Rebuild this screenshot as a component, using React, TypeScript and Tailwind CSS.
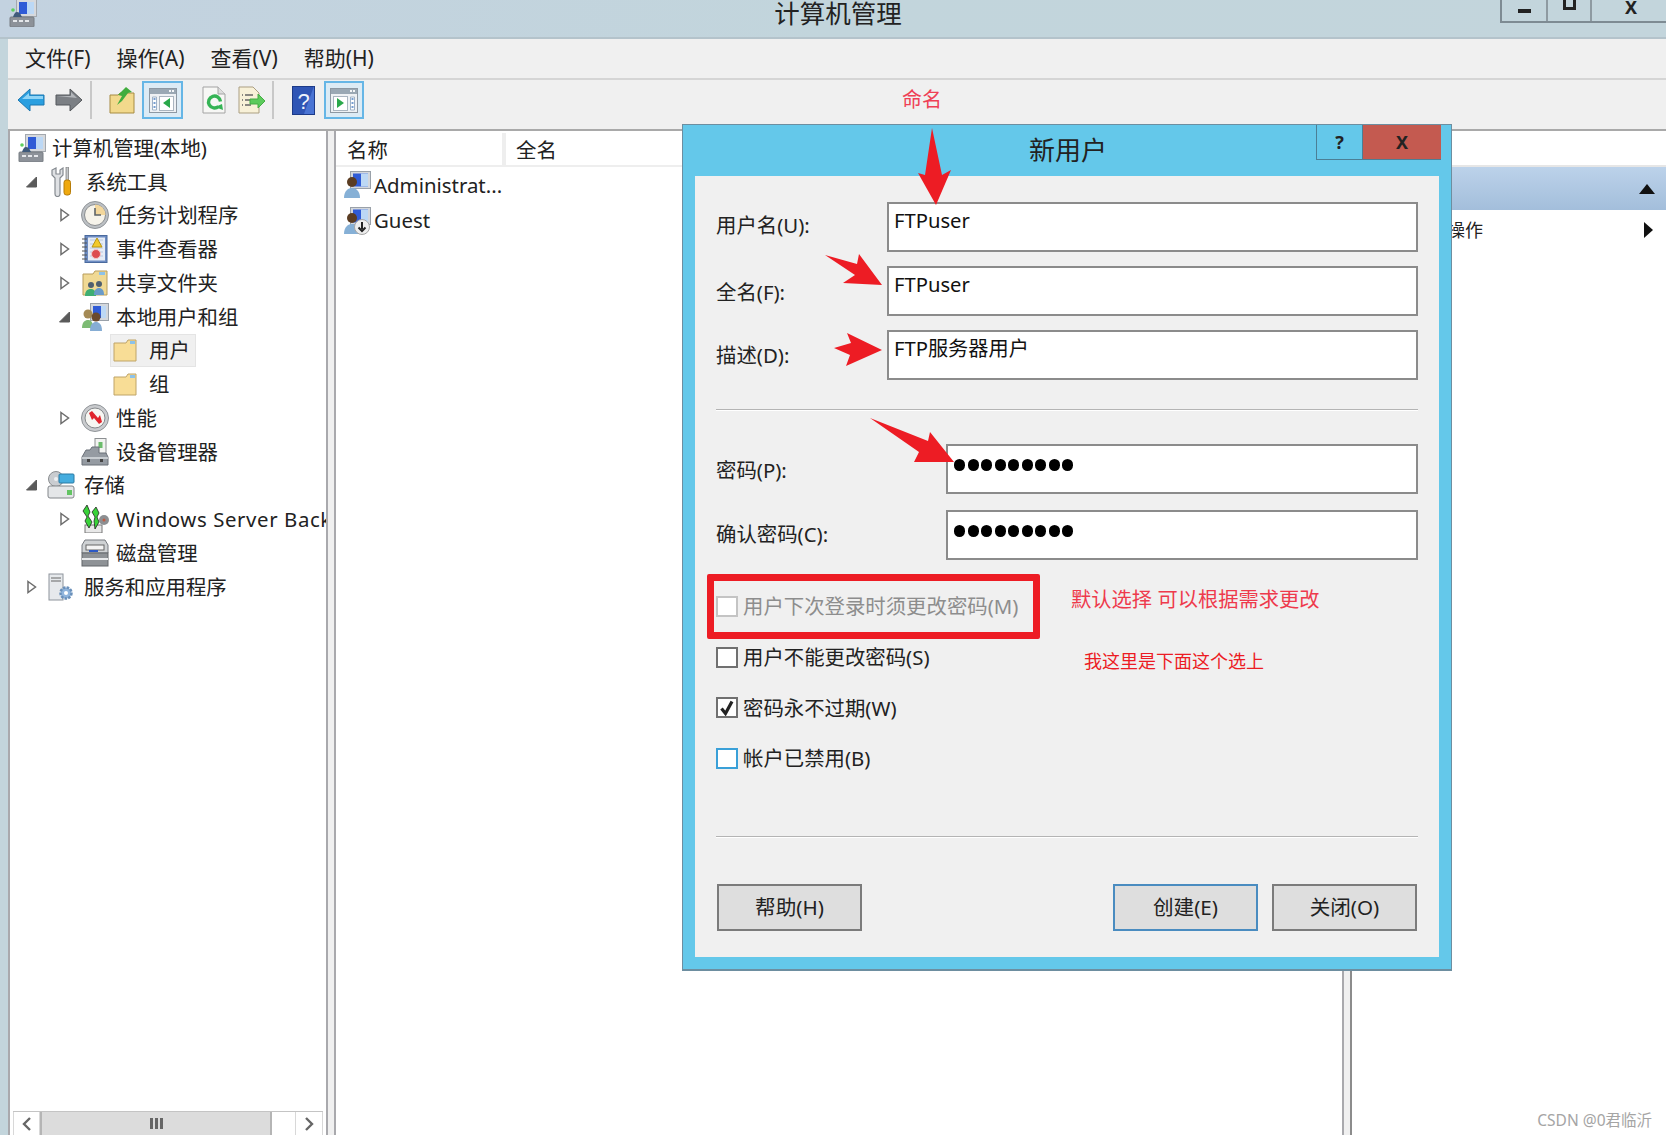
import React from "react";

const FONT = "font-['Noto_Sans','Noto_Sans_CJK_SC',sans-serif]";

function Computer() {
  return (
    <svg width="28" height="28" viewBox="0 0 28 28">
      <rect x="7.5" y="0.5" width="20" height="17" fill="#d6d9dd" stroke="#a3a8ae" />
      <rect x="10" y="3" width="15" height="12" fill="#2f5bd6" />
      <path d="M18 3h7v12h-7z" fill="#bcd8f5" />
      <rect x="1" y="18" width="24" height="10" rx="1" fill="#8d9299" stroke="#777c82" />
      <path d="M4 22h4M10 22h4M16 22h4" stroke="#e5e7ea" strokeWidth="2" />
      <circle cx="4" cy="11" r="1.8" fill="#5fcf5f" />
      <path d="M8 13c3 0 4 3 5 5H4c1-3 2-5 4-5z" fill="#3f5a7a" />
    </svg>
  );
}
function Tools() {
  return (
    <svg width="22" height="30" viewBox="0 0 22 30">
      <path d="M2 3v5l3 3v16a2 2 0 0 0 5 0V11l3-3V1l-3 2v4H6V1z" fill="#dfe1e4" stroke="#858a90" strokeWidth="1.2" />
      <rect x="16" y="0" width="2.5" height="14" fill="#c4c7ca" stroke="#777" strokeWidth=".7" />
      <rect x="14" y="13" width="6.5" height="15" rx="2.5" fill="#efa90f" stroke="#b67c08" />
    </svg>
  );
}
function Clock() {
  return (
    <svg width="28" height="28" viewBox="0 0 28 28">
      <circle cx="14" cy="14" r="13.5" fill="#bcc0c4" stroke="#909498" />
      <circle cx="14" cy="14" r="10.5" fill="#f6f3ea" stroke="#8a8d90" />
      <path d="M14 3.5A10.5 10.5 0 0 1 24.5 14H14z" fill="#f3d79c" />
      <path d="M14 7v7h6" fill="none" stroke="#5e6468" strokeWidth="1.6" />
    </svg>
  );
}
function EventLog() {
  return (
    <svg width="26" height="28" viewBox="0 0 26 28">
      <rect x="3" y="0.5" width="22" height="27" fill="#6d8cc2" stroke="#4a6a9e" />
      <rect x="6" y="2.5" width="17" height="23" fill="#e6ecf6" />
      <path d="M8 5h13M8 9h13M8 13h13M8 17h13M8 21h13" stroke="#b9c8de" />
      <path d="M15 3l5 9h-10z" fill="#f2c92a" stroke="#b79515" />
      <circle cx="14" cy="19" r="4.5" fill="#dc4c50" stroke="#f4c6c6" />
      <path d="M0 4h5M0 8h5M0 12h5M0 16h5M0 20h5M0 24h5" stroke="#555" />
    </svg>
  );
}
function ShareFolder() {
  return (
    <svg width="26" height="28" viewBox="0 0 26 28">
      <path d="M1 5h10l2-3h12v24H1z" fill="#f0d994" stroke="#b89d5c" />
      <path d="M17 3h6v3h-6z" fill="#8cc2ea" />
      <circle cx="9" cy="16" r="3" fill="#4f5f6f" />
      <circle cx="17" cy="15" r="3" fill="#4f5f6f" />
      <path d="M3 27c0-6 3-7 6-7s5 2 5 7z" fill="#3fae72" />
      <path d="M12 26c0-5 2-7 5-7s5 2 5 7z" fill="#6a9bc9" />
    </svg>
  );
}
function Users() {
  return (
    <svg width="28" height="28" viewBox="0 0 28 28">
      <rect x="9.5" y="0.5" width="18" height="17" fill="#d3d7dc" stroke="#9aa1a9" />
      <rect x="12" y="3" width="13" height="12" fill="#2f5bd6" />
      <path d="M20 3h5v12h-5z" fill="#bcd8f5" />
      <circle cx="7" cy="11" r="4.5" fill="#a48a55" />
      <circle cx="15" cy="14" r="4.5" fill="#6b4a2e" />
      <path d="M1 25c0-6 3-8 6-8s5 2 5 8z" fill="#7dbb74" />
      <path d="M9 28c0-7 3-9 6-9s6 2 6 9z" fill="#86add4" />
    </svg>
  );
}
function Folder() {
  return (
    <svg width="24" height="23" viewBox="0 0 24 23">
      <path d="M1 4h12l2-3h8v21H1z" fill="#f8dd96" stroke="#bfa468" />
      <path d="M17 2h5v3h-5z" fill="#8cc2ea" />
    </svg>
  );
}
function Perf() {
  return (
    <svg width="28" height="28" viewBox="0 0 28 28">
      <circle cx="14" cy="14" r="13.5" fill="#c9cbce" stroke="#909498" />
      <circle cx="14" cy="14" r="10" fill="#f6f6f2" stroke="#86898c" />
      <path d="M8 9l3-2 6 7 2-3 2 7-3 2-5-6-2 2z" fill="#e0242c" />
    </svg>
  );
}
function Device() {
  return (
    <svg width="28" height="28" viewBox="0 0 28 28">
      <rect x="14" y="0.5" width="11" height="15" fill="#f2f3f1" stroke="#8c8f92" />
      <rect x="17.5" y="4" width="4" height="6" fill="#6cbc6c" />
      <path d="M9 12l2-3h7v6h7l2 4v8H1v-8l4-7z" fill="#959ba2" stroke="#6a7078" />
      <path d="M1 20h26" stroke="#dfe2e5" strokeWidth="1.4" />
      <rect x="6" y="21" width="3" height="3" fill="#444" />
      <rect x="19" y="21" width="3" height="3" fill="#444" />
    </svg>
  );
}
function Storage() {
  return (
    <svg width="28" height="28" viewBox="0 0 28 28">
      <circle cx="9" cy="8" r="7.5" fill="#c9ccd0" stroke="#8a8d90" />
      <circle cx="9" cy="8" r="2" fill="#eef0f2" />
      <rect x="12" y="3" width="15" height="9" rx="1" fill="#45addf" stroke="#2b7ba4" />
      <rect x="1" y="15" width="26" height="12" rx="2" fill="#e4e6e8" stroke="#82868a" />
      <rect x="20" y="19" width="5" height="5" fill="#63c463" />
    </svg>
  );
}
function Backup() {
  return (
    <svg width="28" height="28" viewBox="0 0 28 28">
      <rect x="4" y="20" width="17" height="8" fill="#e8e8e8" stroke="#777" />
      <circle cx="23" cy="15" r="5" fill="#8c8f92" />
      <circle cx="23" cy="15" r="1.5" fill="#c05a42" />
      <path d="M6 0l3 7-2 4 4 6-3 6-4-7 2-4-4-6z" fill="#39d339" stroke="#222" strokeWidth=".8" />
      <path d="M15 2l3 6-2 4 2 5-4 7-1-8 1-4-3-5z" fill="#39d339" stroke="#222" strokeWidth=".8" />
    </svg>
  );
}
function Disk() {
  return (
    <svg width="28" height="28" viewBox="0 0 28 28">
      <path d="M4 1h20l3 5v8H1V6z" fill="#cfd2d4" stroke="#777b80" />
      <rect x="5" y="6" width="18" height="5" fill="#f4f4f4" stroke="#666" />
      <rect x="1" y="14" width="26" height="13" fill="#8e9296" stroke="#62666a" />
      <path d="M1 20h26" stroke="#e7e9eb" strokeWidth="2" />
      <path d="M8 12h9" stroke="#2c59c5" strokeWidth="2" />
    </svg>
  );
}
function Services() {
  return (
    <svg width="26" height="28" viewBox="0 0 26 28">
      <rect x="1" y="1" width="14" height="26" fill="#e6e9ec" stroke="#8e949c" />
      <path d="M3 5h10M3 8h10" stroke="#666" />
      <circle cx="18" cy="20" r="5.5" fill="#8fb4dc" stroke="#6a90ba" strokeDasharray="2.5 1.2" strokeWidth="2.5" />
      <circle cx="18" cy="20" r="2" fill="#fff" />
    </svg>
  );
}
function UserAdmin({ guest }: { guest?: boolean }) {
  return (
    <svg width="27" height="28" viewBox="0 0 27 28">
      <rect x="6.5" y="0.5" width="20" height="17" fill="#d3d7dc" stroke="#9aa1a9" />
      <rect x="9" y="2.5" width="15" height="13" fill="#2f5bd6" />
      <path d="M17 2.5h7v13h-7z" fill="#bcd8f5" />
      <circle cx="8" cy="11" r="5" fill="#5a3c22" />
      <path d="M0 27c0-7 4-10 8-10s8 3 8 10z" fill="#86b0d6" />
      {guest && (
        <>
          <circle cx="18" cy="20" r="7.5" fill="#eeeeee" stroke="#a5a5a5" />
          <path d="M18 15v7M14.5 20.5l3.5 3.5 3.5-3.5" fill="none" stroke="#222" strokeWidth="2" />
        </>
      )}
    </svg>
  );
}

function Expander({ open }: { open?: boolean }) {
  return (
    <svg width="12" height="14" viewBox="0 0 12 14" className="shrink-0">
      {open ? (
        <path d="M10.5 2v10h-10z" fill="#5a5a5a" stroke="#5a5a5a" />
      ) : (
        <path d="M2 1.5l7.5 5.5L2 12.5z" fill="#fff" stroke="#6e6e6e" strokeWidth="1.5" />
      )}
    </svg>
  );
}

function TreeRow({
  pad,
  exp,
  icon,
  gap,
  children,
}: {
  pad: string;
  exp?: "open" | "closed";
  icon: React.ReactNode;
  gap: string;
  children: React.ReactNode;
}) {
  return (
    <div className={`flex h-[33.75px] items-center whitespace-nowrap ${pad}`}>
      <div className="w-[12px] shrink-0">{exp && <Expander open={exp === "open"} />}</div>
      <div className={`flex w-[28px] shrink-0 justify-center ${gap}`}>{icon}</div>
      {children}
    </div>
  );
}

function Field({
  label,
  value,
  inputW,
  dots,
  labelCls,
}: {
  label: string;
  value?: string;
  inputW: string;
  dots?: boolean;
  labelCls: string;
}) {
  return (
    <div className="flex items-center justify-between">
      <span className={`text-[20.4px] text-[#222] ${labelCls}`}>{label}</span>
      <div className={`h-full min-h-[50px] border-2 border-[#8b8b8b] bg-white pl-[5px] pt-[1px] text-[20.2px] leading-[30px] text-[#111] ${inputW}`}>
        {dots ? (
          <div className="flex h-[35px] items-center gap-[2.5px] pl-[1px]">
            {[0, 1, 2, 3, 4, 5, 6, 7, 8].map((i) => (
              <span key={i} className="h-[12px] w-[11px] rounded-full bg-black" />
            ))}
          </div>
        ) : (
          value
        )}
      </div>
    </div>
  );
}

function Check({ label, tone, checked, disabled }: { label: string; tone: string; checked?: boolean; disabled?: boolean }) {
  return (
    <div className="flex h-[21px] items-center gap-[5px]">
      <div className={`flex h-[21px] w-[22px] items-center justify-center border-2 bg-white ${tone}`}>
        {checked && (
          <svg width="16" height="16" viewBox="0 0 16 16">
            <path d="M2.5 8.5L6.5 13.5 13 1.5" fill="none" stroke="#222" strokeWidth="3.2" />
          </svg>
        )}
      </div>
      <span className={`text-[20.4px] ${disabled ? "text-[#8d8d8d]" : "text-[#222]"}`}>{label}</span>
    </div>
  );
}

function Btn({ label, tone }: { label: string; tone: string }) {
  return (
    <div className={`flex h-[47px] w-[145px] items-center justify-center border-2 bg-[#dedede] text-[20.6px] text-[#222] ${tone}`}>
      {label}
    </div>
  );
}

function PaneIcon({ left }: { left?: boolean }) {
  return (
    <svg width="28" height="25" viewBox="0 0 28 25">
      <rect x="0.5" y="0.5" width="27" height="24" fill="#eef1f4" stroke="#8d98a3" />
      <rect x="1" y="1" width="26" height="5" fill="#9aa8b4" />
      <path d="M20 3h2M23 3h2" stroke="#f4f6f8" strokeWidth="2" />
      {left ? (
        <>
          <path d="M3.5 9h4v13h-4z" fill="#fff" stroke="#9fb2c7" />
          <path d="M4.5 11h2M4.5 15h2M4.5 19h2" stroke="#4a7fc2" strokeWidth="1.6" />
          <rect x="10.5" y="8.5" width="14" height="14" fill="#fff" stroke="#aab5c0" />
          <path d="M21 10v10l-7-5z" fill="#2aa84a" />
        </>
      ) : (
        <>
          <path d="M20.5 9h4v13h-4z" fill="#fff" stroke="#9fb2c7" />
          <path d="M21.5 11h2M21.5 15h2M21.5 19h2" stroke="#4a7fc2" strokeWidth="1.6" />
          <rect x="3.5" y="8.5" width="14" height="14" fill="#fff" stroke="#aab5c0" />
          <path d="M7 10v10l7-5z" fill="#2aa84a" />
        </>
      )}
    </svg>
  );
}

export default function App() {
  return (
    <div className={`relative flex h-[1135px] w-[1666px] flex-col overflow-hidden bg-[#c3d5dc] ${FONT}`}>
      {/* Title bar */}
      <div className="relative flex h-[39px] shrink-0 items-start justify-center border-b-2 border-[#b4c3cb] bg-[linear-gradient(90deg,#c3d2e0_0%,#c2d5dc_50%,#c3d5dc_100%)]">
        <div className="absolute left-[9px] top-[-1px]">
          <Computer />
        </div>
        <span className="ml-[10px] mt-[-4px] text-[25.5px] leading-[34px] text-[#222]">计算机管理</span>
        <div className="absolute right-0 top-0 flex h-[23px] w-[166px] border-b-2 border-l-2 border-[#7e8b93]">
          <div className="flex w-[46px] items-center justify-center border-r-2 border-[#8e9aa1]">
            <span className="h-[4px] w-[13px] bg-[#222]" />
          </div>
          <div className="flex w-[44px] items-start justify-center border-r-2 border-[#8e9aa1]">
            <span className="h-[10px] w-[13px] border-[3px] border-t-0 border-[#222]" />
          </div>
          <div className="flex flex-1 items-start justify-center pl-[4px] text-[18px] font-bold leading-[14px] text-[#222]">X</div>
        </div>
      </div>

      <div className="ml-[8px] flex min-h-0 flex-1 flex-col bg-[#f0f0f0]">
        {/* Menu bar */}
        <div className="flex h-[41px] shrink-0 items-center gap-[26px] border-b-2 border-[#d5d5d5] pl-[17px] text-[21px] text-[#222]">
          <span>文件(F)</span>
          <span>操作(A)</span>
          <span>查看(V)</span>
          <span>帮助(H)</span>
        </div>

        {/* Toolbar */}
        <div className="relative flex h-[49px] shrink-0 items-center pb-[9px] pl-[9px]">
          <svg width="28" height="24" viewBox="0 0 28 24">
            <path d="M1 12L13 1v6h14v10H13v6z" fill="#2a9fe0" stroke="#1b77b0" />
            <path d="M5 11l7-6v3h14v3z" fill="#8fd4f6" />
          </svg>
          <svg width="28" height="24" viewBox="0 0 28 24" className="ml-[10px]">
            <path d="M27 12L15 1v6H1v10h14v6z" fill="#7b7f84" stroke="#55585c" />
            <path d="M2 8h14V4l6 6z" fill="#b3b6ba" />
          </svg>
          <div className="ml-[7px] h-[38px] w-[2px] bg-[#c8c8c8]" />
          <svg width="26" height="28" viewBox="0 0 26 28" className="ml-[17px]">
            <path d="M1 9h8l2-2h14v20H1z" fill="#f2d98c" stroke="#a68b42" />
            <path d="M8 19l5-9-4-1 8-8 6 5-4 1-6 8z" fill="#40ad3d" />
          </svg>
          <div className="ml-[7px] flex h-[38px] w-[41px] items-center justify-center border-2 border-[#66b6e6] bg-[#dcebf5]">
            <PaneIcon left />
          </div>
          <svg width="24" height="28" viewBox="0 0 24 28" className="ml-[19px]">
            <path d="M1 1h15l7 7v19H1z" fill="#f7f7f5" stroke="#a3a3a3" />
            <path d="M16 1v7h7" fill="#ddd" stroke="#a3a3a3" />
            <path d="M16.5 20.5a6 6 0 1 1 2-5" fill="none" stroke="#35b455" strokeWidth="3.4" />
            <path d="M13 21l7 -3 1 6z" fill="#35b455" />
          </svg>
          <svg width="28" height="28" viewBox="0 0 28 28" className="ml-[12px]">
            <path d="M1 1h14l6 6v20H1z" fill="#f8f1d8" stroke="#ab9f82" />
            <path d="M4 9h1M7 9h8M4 14h1M7 14h6M4 19h1M7 19h6" stroke="#666" strokeWidth="1.5" />
            <path d="M12 13h8V8l7 7-7 7v-4h-8z" fill="#5ccb5c" stroke="#45ac45" />
          </svg>
          <div className="ml-[6px] h-[38px] w-[2px] bg-[#c8c8c8]" />
          <svg width="23" height="29" viewBox="0 0 23 29" className="ml-[18px]">
            <rect x="0.5" y="0.5" width="22" height="28" fill="#2f55b5" stroke="#1c3a88" />
            <path d="M22 0v28l-10 0z" fill="#4a74d4" />
            <text x="11.5" y="23" textAnchor="middle" fontSize="22" fill="#eef2fc" fontFamily="'Liberation Sans',sans-serif">?</text>
          </svg>
          <div className="ml-[9px] flex h-[38px] w-[40px] items-center justify-center border-2 border-[#66b6e6] bg-[#dcebf5]">
            <PaneIcon />
          </div>
          <span className="absolute left-[894px] top-[5px] text-[20px] leading-[30px] text-[#ef4055]">命名</span>
        </div>

        {/* Panes */}
        <div className="flex min-h-0 flex-1 gap-[6px] border-t-2 border-[#a9a9a9]">
          {/* Tree pane */}
          <div className="flex w-[320px] shrink-0 flex-col overflow-hidden border-x-2 border-[#a9a9ad] bg-white text-[20.4px] leading-[30px] text-[#222]">
            <div className="flex-1 overflow-hidden">
              <TreeRow pad="pl-[5px]" icon={<Computer />} gap="mr-[6px] -ml-[9px]">计算机管理(本地)</TreeRow>
              <TreeRow pad="pl-[16px]" exp="open" icon={<Tools />} gap="ml-[9px] mr-[11px]">系统工具</TreeRow>
              <TreeRow pad="pl-[49px]" exp="closed" icon={<Clock />} gap="ml-[10px] mr-[7px]">任务计划程序</TreeRow>
              <TreeRow pad="pl-[49px]" exp="closed" icon={<EventLog />} gap="ml-[10px] mr-[7px]">事件查看器</TreeRow>
              <TreeRow pad="pl-[49px]" exp="closed" icon={<ShareFolder />} gap="ml-[10px] mr-[7px]">共享文件夹</TreeRow>
              <TreeRow pad="pl-[49px]" exp="open" icon={<Users />} gap="ml-[10px] mr-[7px]">本地用户和组</TreeRow>
              <div className="ml-[100px] flex h-[33.75px] w-[86px] items-center border border-[#e4e4e4] bg-[#f0f0f0] pl-[2px]">
                <Folder />
                <span className="ml-[12px]">用户</span>
              </div>
              <div className="ml-[103px] flex h-[33.75px] items-center">
                <Folder />
                <span className="ml-[12px]">组</span>
              </div>
              <TreeRow pad="pl-[49px]" exp="closed" icon={<Perf />} gap="ml-[10px] mr-[7px]">性能</TreeRow>
              <TreeRow pad="pl-[49px]" icon={<Device />} gap="ml-[10px] mr-[7px]">设备管理器</TreeRow>
              <TreeRow pad="pl-[16px]" exp="open" icon={<Storage />} gap="ml-[9px] mr-[9px]">存储</TreeRow>
              <TreeRow pad="pl-[49px]" exp="closed" icon={<Backup />} gap="ml-[10px] mr-[7px]">
                <span className="pb-[1px] tracking-[0.6px]">Windows Server Backup</span>
              </TreeRow>
              <TreeRow pad="pl-[49px]" icon={<Disk />} gap="ml-[10px] mr-[7px]">磁盘管理</TreeRow>
              <TreeRow pad="pl-[16px]" exp="closed" icon={<Services />} gap="ml-[9px] mr-[9px]">服务和应用程序</TreeRow>
            </div>
            {/* Scrollbar */}
            <div className="mx-[3px] flex h-[24px] shrink-0 border-t border-[#c4c4c4] text-[#666]">
              <div className="flex w-[27px] items-center justify-center border-x border-[#d8d8d8]">
                <svg width="10" height="14" viewBox="0 0 10 14"><path d="M8 1L2 7l6 6" fill="none" stroke="#666" strokeWidth="2.4" /></svg>
              </div>
              <div className="flex w-[232px] items-center justify-center gap-[2px] border-x-2 border-[#b5b5b5] bg-[#dcdcdc]">
                <span className="h-[11px] w-[3px] bg-[#666]" />
                <span className="h-[11px] w-[3px] bg-[#666]" />
                <span className="h-[11px] w-[3px] bg-[#666]" />
              </div>
              <div className="flex-1" />
              <div className="flex w-[28px] items-center justify-center border-x border-[#d8d8d8]">
                <svg width="10" height="14" viewBox="0 0 10 14"><path d="M2 1l6 6-6 6" fill="none" stroke="#666" strokeWidth="2.4" /></svg>
              </div>
            </div>
          </div>

          {/* List pane */}
          <div className="flex w-[1010px] shrink-0 flex-col border-x-2 border-[#a9a9ad] bg-white pt-[2px] text-[20.4px] text-[#222]">
            <div className="flex h-[34px] shrink-0 border-b-2 border-[#eeeeee] pl-[2px]">
              <div className="flex w-[168px] items-center border-r-4 border-[#eeeeee] pl-[9px] pt-[3px]">名称</div>
              <div className="flex items-center pl-[10px] pt-[3px]">全名</div>
            </div>
            <div className="flex h-[36px] items-center gap-[3px] pl-[8px]">
              <UserAdmin />
              <span>Administrat...</span>
            </div>
            <div className="flex h-[35px] items-center gap-[3px] pl-[8px]">
              <UserAdmin guest />
              <span>Guest</span>
            </div>
          </div>

          {/* Actions pane */}
          <div className="flex min-w-0 flex-1 flex-col border-l-2 border-[#8c8c8c] bg-white text-[18px] text-[#222]">
            <div className="h-[36px] shrink-0 border-b-2 border-[#e6e6e6] bg-white" />
            <div className="flex h-[43px] shrink-0 items-center justify-end bg-[linear-gradient(180deg,#bcd2ea,#a3bedb)] pr-[11px]">
              <svg width="16" height="10" viewBox="0 0 16 10"><path d="M8 0l8 10H0z" fill="#111" /></svg>
            </div>
            <div className="flex h-[40px] shrink-0 items-center justify-between pl-[95px] pr-[13px]">
              <span>操作</span>
              <svg width="9" height="16" viewBox="0 0 9 16"><path d="M0 0l9 8-9 8z" fill="#111" /></svg>
            </div>
          </div>
        </div>
      </div>

      {/* Dialog window */}
      <div className="absolute left-[682px] top-[124px] flex h-[847px] w-[770px] flex-col border border-b-2 border-[#6d8ea0] bg-[#64c8ea] px-[12px] pb-[12px]">
        <div className="relative flex h-[51px] shrink-0 items-center justify-center text-[26px] text-[#222]">
          <span className="mr-[-2px] mt-[-1px]">新用户</span>
          <div className="absolute right-[-2px] top-0 flex h-[35px] w-[125px] border-b border-l border-[#4b7f96] text-[18px] font-bold">
            <div className="flex w-[46px] items-center justify-center border-r border-[#4b7f96]">?</div>
            <div className="flex flex-1 items-center justify-center bg-[#c45a50]">X</div>
          </div>
        </div>
        <div className="flex flex-1 flex-col bg-[#f0f0f0] pl-[21px] pr-[21px] pt-[26px]">
          <div className="flex flex-col gap-[14px]">
            <Field label="用户名(U):" value="FTPuser" inputW="w-[531px]" labelCls="pb-[3px]" />
            <Field label="全名(F):" value="FTPuser" inputW="w-[531px]" labelCls="pt-[3px]" />
            <Field label="描述(D):" value="FTP服务器用户" inputW="w-[531px]" labelCls="pt-[1px]" />
          </div>
          <div className="mt-[29px] h-[2px] border-t border-[#b4b4b4] bg-white" />
          <div className="mt-[33px] flex flex-col gap-[16px]">
            <Field label="密码(P):" dots inputW="w-[472px]" labelCls="pt-[3px]" />
            <Field label="确认密码(C):" dots inputW="w-[472px]" labelCls="pb-[1px]" />
          </div>
          <div className="relative mt-[36px] flex flex-col gap-[29.7px]">
            <div className="absolute left-[-9px] top-[-22px] h-[65px] w-[333px] rounded-[2px] border-[7px] border-[#ed1c24]" />
            <Check label="用户下次登录时须更改密码(M)" tone="border-[#c4c4c4]" disabled />
            <Check label="用户不能更改密码(S)" tone="border-[#707070]" />
            <Check label="密码永不过期(W)" tone="border-[#707070]" checked />
            <Check label="帐户已禁用(B)" tone="border-[#3aa0d8]" />
            <span className="absolute left-[355px] top-[-12px] whitespace-nowrap text-[20.3px] leading-[30px] text-[#ee3a4c]">默认选择 可以根据需求更改</span>
            <span className="absolute left-[368px] top-[51px] whitespace-nowrap text-[18px] leading-[28px] text-[#ec1c24]">我这里是下面这个选上</span>
          </div>
          <div className="mt-[67px] h-[2px] border-t border-[#b4b4b4] bg-white" />
          <div className="mt-[46px] flex items-center pl-[1px] pr-[1px]">
            <Btn label="帮助(H)" tone="border-[#7b7b7b]" />
            <div className="flex-1" />
            <Btn label="创建(E)" tone="border-[#4a8cc0]" />
            <div className="w-[14px]" />
            <Btn label="关闭(O)" tone="border-[#7b7b7b]" />
          </div>
        </div>
      </div>

      {/* Red annotation arrows */}
      <svg className="pointer-events-none absolute left-0 top-0" width="1666" height="1135" viewBox="0 0 1666 1135">
        <path d="M932 128L942 175 951 170 936 205 918 173 925 175z" fill="#ed1c24" />
        <path d="M825 255L857 264 859 254 882 285 843 283 855 275z" fill="#ed1c24" />
        <path d="M834 348L851 343 847 333 882 350 846 366 850 355z" fill="#ed1c24" />
        <path d="M870 418L928 441 930 432 954 462 914 462 919 452z" fill="#ed1c24" />
      </svg>

      {/* Watermark */}
      <span className="absolute bottom-[4px] right-[14px] text-[15.5px] leading-[22px] text-[#a5a5a5]">CSDN @0君临沂</span>
    </div>
  );
}
